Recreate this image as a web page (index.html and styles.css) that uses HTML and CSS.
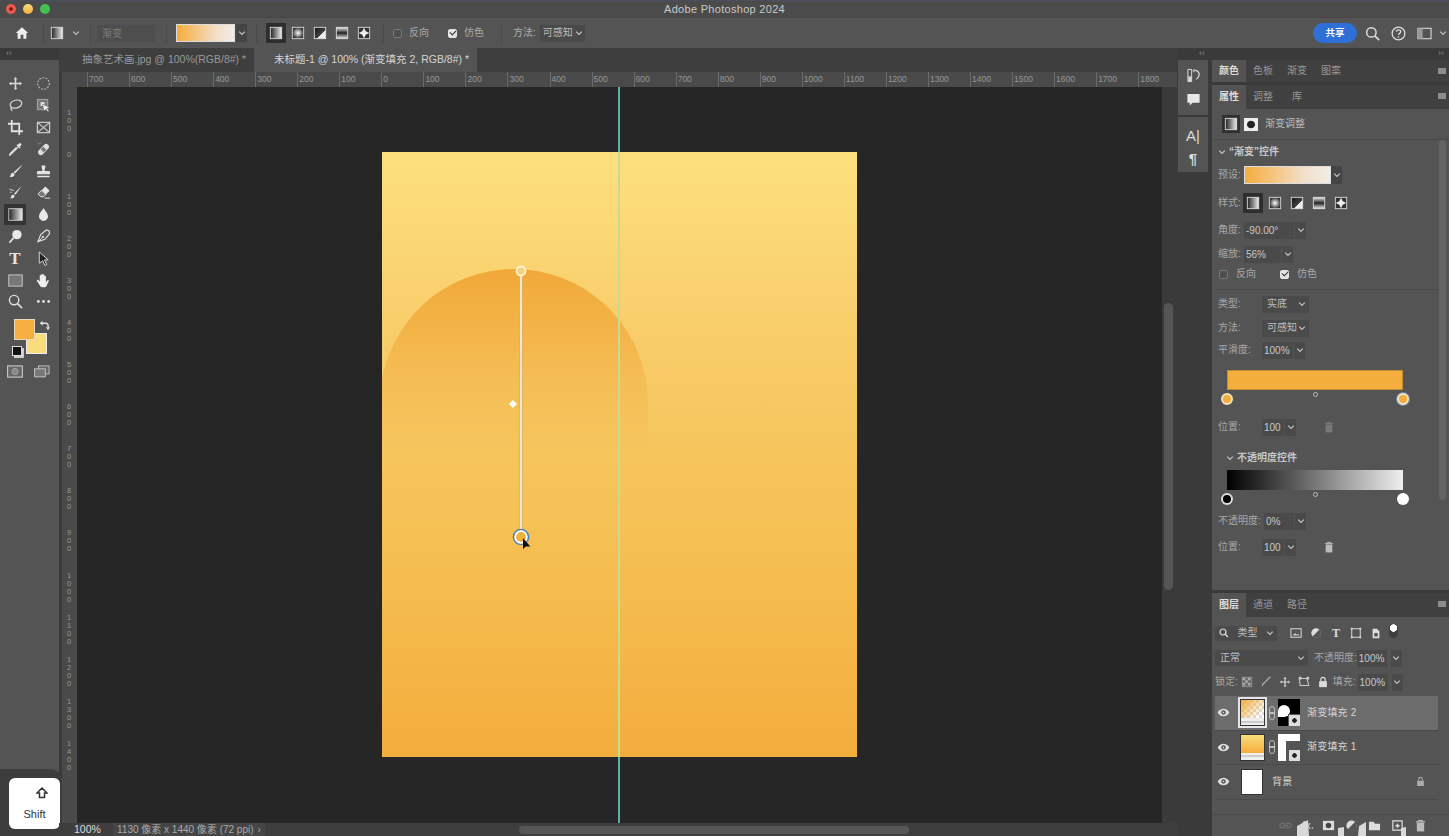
FILE: index.html
```html
<!DOCTYPE html>
<html lang="zh">
<head>
<meta charset="utf-8">
<title>Adobe Photoshop 2024</title>
<link rel="stylesheet" href="styles.css">
</head>
<body>
<svg class="sprite" aria-hidden="true">
  <defs>
    <linearGradient id="gtool" x1="0" x2="1" y1="0" y2="0"><stop offset="0" stop-color="#222"/><stop offset="1" stop-color="#eee"/></linearGradient>
    <radialGradient id="gradial"><stop offset="0" stop-color="#fff"/><stop offset="1" stop-color="#333"/></radialGradient>
    <linearGradient id="gangle" x1="0" x2="1" y1="0" y2="1"><stop offset="0" stop-color="#111"/><stop offset=".6" stop-color="#444"/><stop offset=".6" stop-color="#eee"/><stop offset="1" stop-color="#eee"/></linearGradient>
    <linearGradient id="gmirror" x1="0" x2="0" y1="0" y2="1"><stop offset="0" stop-color="#eee"/><stop offset=".5" stop-color="#222"/><stop offset="1" stop-color="#eee"/></linearGradient>
    <symbol id="i-chev" viewBox="0 0 8 8"><path d="M1.2 2.6 4 5.4l2.8-2.8" fill="none" stroke="#c4c4c4" stroke-width="1.2"/></symbol>
    <symbol id="s-linear" viewBox="0 0 16 16"><rect x="1.5" y="1.5" width="13" height="13" fill="url(#gtool)" stroke="#ddd"/></symbol>
    <symbol id="s-radial" viewBox="0 0 16 16"><rect x="1.5" y="1.5" width="13" height="13" fill="url(#gradial)" stroke="#ddd"/></symbol>
    <symbol id="s-angle" viewBox="0 0 16 16"><rect x="1.5" y="1.5" width="13" height="13" fill="url(#gangle)" stroke="#ddd"/></symbol>
    <symbol id="s-mirror" viewBox="0 0 16 16"><rect x="1.5" y="1.5" width="13" height="13" fill="url(#gmirror)" stroke="#ddd"/></symbol>
    <symbol id="s-diamond" viewBox="0 0 16 16"><rect x="1.5" y="1.5" width="13" height="13" fill="#333" stroke="#ddd"/><path d="M8 2 10 6 14 8 10 10 8 14 6 10 2 8 6 6Z" fill="#eee"/></symbol>
    <symbol id="t-move" viewBox="0 0 16 16"><path d="M8 1 10 3.5H8.8V7.2h3.7V6L15 8l-2.5 2V8.8H8.8v3.7H10L8 15l-2-2.5h1.2V8.8H3.5V10L1 8l2.5-2v1.2h3.7V3.5H6Z" fill="#d8d8d8"/></symbol>
    <symbol id="t-marquee" viewBox="0 0 16 16"><circle cx="8" cy="8" r="6.2" fill="none" stroke="#bbb" stroke-width="1.2" stroke-dasharray="2 1.4"/></symbol>
    <symbol id="t-lasso" viewBox="0 0 16 16"><ellipse cx="8.5" cy="6.5" rx="6.3" ry="4.2" fill="none" stroke="#d8d8d8" stroke-width="1.3" transform="rotate(-14 8.5 6.5)"/><path d="M4 10c-1.5 1-1 3 .8 3.4" fill="none" stroke="#d8d8d8" stroke-width="1.3"/></symbol>
    <symbol id="t-object" viewBox="0 0 16 16"><rect x="1.5" y="1.5" width="11" height="11" fill="#777" stroke="#aaa"/><path d="M5 4.5h4v4H5z" fill="#eee"/><path d="M7 6.5 15 10l-3 1 2 3-1.4 1-2-3-2.3 2Z" fill="#eee" stroke="#444" stroke-width=".5"/></symbol>
    <symbol id="t-crop" viewBox="0 0 16 16"><path d="M4 0v12h12M0 4h12v12" fill="none" stroke="#e0e0e0" stroke-width="1.9"/></symbol>
    <symbol id="t-frame" viewBox="0 0 16 16"><rect x="1.5" y="2.5" width="13" height="11" fill="none" stroke="#ccc" stroke-width="1.3"/><path d="M1.5 2.5l13 11M14.5 2.5l-13 11" stroke="#ccc" stroke-width="1.3"/></symbol>
    <symbol id="t-dropper" viewBox="0 0 16 16"><path d="M10.5 5.5 3 13l-1.5 1.5.9-2L9 6" fill="none" stroke="#ddd" stroke-width="1.6"/><path d="M9 3.5 12.5 7l1-1-1-1 1.4-1.4a1.4 1.4 0 0 0-2-2L10.5 3l-.6-.5Z" fill="#e4e4e4"/></symbol>
    <symbol id="t-heal" viewBox="0 0 16 16"><g transform="rotate(-45 8 8)"><rect x="1" y="5" width="14" height="6" rx="3" fill="#ddd"/><rect x="6" y="5.8" width="4" height="4.4" fill="#777"/></g><path d="M3 2.5a1 1 0 0 1 2-1" fill="none" stroke="#bbb" stroke-dasharray="1.5 1"/></symbol>
    <symbol id="t-brush" viewBox="0 0 16 16"><path d="M14.5 1.2 15 1.7 7.5 10.2 6 8.7Z" fill="#e4e4e4"/><path d="M5.5 9.2c-2 .2-2.5 1.5-2.8 3-.1.8-.6 1.2-1.4 1.6 2.8.6 5.5-.4 5.8-3Z" fill="#e4e4e4"/></symbol>
    <symbol id="t-stamp" viewBox="0 0 16 16"><path d="M6 1.5h4c.5 2.500-1.200 4-.8 6h4.300c.9 0 1.500.6 1.500 1.400V11H1V8.900c0-.8.6-1.400 1.500-1.400h4.300C7.200 5.500 5.500 4 6 1.500Z M1.500 12.500h13V14h-13Z" fill="#e4e4e4"/></symbol>
    <symbol id="t-mixer" viewBox="0 0 16 16"><path d="M14.500 1 6.500 9 8 10.500Z" fill="#e4e4e4"/><path d="M5.500 10c-1.800.4-2 1.600-2.300 2.700-.2.700-.6 1-1.200 1.300 2.500.6 5-.3 5-2.600Z" fill="#e4e4e4"/><path d="M1.500 4.500l5 1.500M2 7.500l2 .5" stroke="#aaa" stroke-width="1.400"/></symbol>
    <symbol id="t-eraser" viewBox="0 0 16 16"><path d="M10 1.500 14.500 6 8 12.500H5L2 9.500Z" fill="#e4e4e4"/><path d="M2 9.500 5 12.500H8L10.500 10 6 5.500Z" fill="#777" stroke="#e4e4e4"/><path d="M9 14h6" stroke="#ccc" stroke-width="1.200"/></symbol>
    <symbol id="t-gradient" viewBox="0 0 16 16"><rect x=".8" y="1.800" width="14.400" height="12.400" fill="url(#gtool)" stroke="#c8c8c8"/></symbol>
    <symbol id="t-drop" viewBox="0 0 16 16"><path d="M8 1c1.500 3 4.800 5.500 4.800 9a4.800 4.800 0 0 1-9.600 0C3.200 6.500 6.500 4 8 1Z" fill="#e8e8e8"/></symbol>
    <symbol id="t-dodge" viewBox="0 0 16 16"><circle cx="9.500" cy="6" r="5" fill="#e8e8e8"/><path d="M6 9.500 1.500 14.500" stroke="#e0e0e0" stroke-width="1.800"/></symbol>
    <symbol id="t-pen" viewBox="0 0 16 16"><path d="M14 2 11 1 5 6 2 13.500 9.500 11 14.500 5Z" fill="none" stroke="#ddd" stroke-width="1.300"/><path d="M2 14 7 9" stroke="#ddd"/><circle cx="7.500" cy="8.500" r="1.200" fill="#ddd"/></symbol>
    <symbol id="t-arrow" viewBox="0 0 16 16"><path d="M3.500 1 13 9.500H9l2.500 5-2 1-2.400-5L3.500 13Z" fill="#222" stroke="#ddd" stroke-width="1"/></symbol>
    <symbol id="t-rect" viewBox="0 0 16 16"><rect x=".8" y="2" width="14.400" height="12" fill="#777" stroke="#c8c8c8"/></symbol>
    <symbol id="t-hand" viewBox="0 0 16 16"><path d="M4 13 1 8.500c-.5-1 .8-1.800 1.500-1L4 9V3c0-1.200 1.600-1.200 1.600 0v4-5.200c0-1.200 1.700-1.200 1.700 0V7 2.300c0-1.200 1.700-1.200 1.700 0V7 3.700c0-1.200 1.600-1.200 1.600 0V10l1.400-2c.7-1 2-.2 1.500.8L11 14c-.4.800-1 1.200-2 1.200H6.500C5.400 15.200 4.600 14 4 13Z" fill="#eee"/></symbol>
    <symbol id="t-zoom" viewBox="0 0 16 16"><circle cx="6.500" cy="6.500" r="5" fill="none" stroke="#ddd" stroke-width="1.500"/><path d="M10 10l5 5" stroke="#ddd" stroke-width="1.800"/></symbol>
    <symbol id="t-dots" viewBox="0 0 16 16"><circle cx="2.500" cy="8" r="1.500" fill="#e4e4e4"/><circle cx="8" cy="8" r="1.500" fill="#e4e4e4"/><circle cx="13.500" cy="8" r="1.500" fill="#e4e4e4"/></symbol>
    <symbol id="t-mask" viewBox="0 0 18 14"><rect x=".7" y=".7" width="16.600" height="12.600" fill="#666" stroke="#ccc" stroke-width="1.200"/><circle cx="9" cy="7" r="3.500" fill="#888" stroke="#aaa"/></symbol>
    <symbol id="t-screen" viewBox="0 0 18 14"><rect x="5" y=".7" width="12" height="9" fill="#666" stroke="#ccc"/><rect x=".7" y="4" width="12" height="9" fill="#777" stroke="#ccc"/></symbol>
    <symbol id="i-eye" viewBox="0 0 14 10"><path d="M.5 5C2 2 4.500 .8 7 .8S12 2 13.500 5C12 8 9.500 9.200 7 9.200S2 8 .5 5Z" fill="#ddd"/><circle cx="7" cy="5" r="2.400" fill="#444"/><circle cx="7" cy="5" r="1" fill="#ddd"/></symbol>
    <symbol id="i-trash" viewBox="0 0 12 14"><path d="M1 3h10M4 3V1.500h4V3" fill="none" stroke="currentColor" stroke-width="1.200"/><path d="M2 4h8v9.500H2Z" fill="currentColor"/></symbol>
    <symbol id="i-lock" viewBox="0 0 12 14"><path d="M3.500 6V4a2.500 2.500 0 0 1 5 0v2" fill="none" stroke="currentColor" stroke-width="1.400"/><rect x="1.500" y="6" width="9" height="7" fill="currentColor"/></symbol>
  </defs>
</svg>

<header class="titlebar">
  <div class="lights"><span class="light red"></span><span class="light yellow"></span><span class="light green"></span></div>
  <div class="apptitle">Adobe Photoshop 2024</div>
</header>

<div class="optionsbar">
  <svg class="home" viewBox="0 0 16 16"><path d="M8 1.500 15 8h-2v6.500H9.600V10H6.400v4.500H3V8H1Z" fill="#eee"/></svg>
  <span class="sep home-sep"></span>
  <svg class="ico14"><use href="#s-linear"/></svg>
  <svg class="chev opt-chev"><use href="#i-chev"/></svg>
  <span class="sep tool-sep"></span>
  <div class="preset-input">渐变</div>
  <span class="sep"></span>
  <div class="swatch-wrap"><div class="gradient-swatch"></div><div class="chev-box"><svg class="chev"><use href="#i-chev"/></svg></div></div>
  <span class="sep"></span>
  <div class="styles">
    <span class="style-btn active"><svg class="ico14"><use href="#s-linear"/></svg></span>
    <span class="style-btn"><svg class="ico14"><use href="#s-radial"/></svg></span>
    <span class="style-btn"><svg class="ico14"><use href="#s-angle"/></svg></span>
    <span class="style-btn"><svg class="ico14"><use href="#s-mirror"/></svg></span>
    <span class="style-btn"><svg class="ico14"><use href="#s-diamond"/></svg></span>
  </div>
  <span class="sep"></span>
  <label class="check opt-check"><span class="box"></span>反向</label>
  <label class="check opt-check"><span class="box on"></span>仿色</label>
  <span class="sep"></span>
  <span class="opt-label">方法:</span>
  <div class="select opt-select"><span>可感知</span><svg class="chev"><use href="#i-chev"/></svg></div>
  <div class="spacer"></div>
  <button class="share">共享</button>
  <svg class="opt-ic" viewBox="0 0 16 16"><circle cx="6.800" cy="6.800" r="5" fill="none" stroke="#ddd" stroke-width="1.600"/><path d="M10.500 10.500 15 15" stroke="#ddd" stroke-width="1.800"/></svg>
  <svg class="opt-ic" viewBox="0 0 16 16"><circle cx="8" cy="8" r="6.800" fill="none" stroke="#ddd" stroke-width="1.400"/><path d="M5.800 6.200C5.900 3.400 10.300 3.500 10.300 6c0 1.700-2.300 1.700-2.300 3.700" fill="none" stroke="#ddd" stroke-width="1.400"/><circle cx="8" cy="11.700" r=".9" fill="#ddd"/></svg>
  <svg class="opt-ic" viewBox="0 0 16 16"><rect x="1" y="2.500" width="14" height="11" fill="none" stroke="#ccc" stroke-width="1.300"/><rect x="1" y="2.500" width="5" height="11" fill="#999"/></svg>
  <svg class="chev opt-end"><use href="#i-chev"/></svg>
</div>

<div class="workspace">
  <aside class="toolcol">
    <div class="collapse">‹‹</div>
    <div class="tools">
      <svg class="tool"><use href="#t-move"/></svg><svg class="tool"><use href="#t-marquee"/></svg>
      <svg class="tool"><use href="#t-lasso"/></svg><svg class="tool"><use href="#t-object"/></svg>
      <svg class="tool"><use href="#t-crop"/></svg><svg class="tool"><use href="#t-frame"/></svg>
      <svg class="tool"><use href="#t-dropper"/></svg><svg class="tool"><use href="#t-heal"/></svg>
      <svg class="tool"><use href="#t-brush"/></svg><svg class="tool"><use href="#t-stamp"/></svg>
      <svg class="tool"><use href="#t-mixer"/></svg><svg class="tool"><use href="#t-eraser"/></svg>
      <span class="tool-active"><svg class="tool"><use href="#t-gradient"/></svg></span><svg class="tool"><use href="#t-drop"/></svg>
      <svg class="tool"><use href="#t-dodge"/></svg><svg class="tool"><use href="#t-pen"/></svg>
      <span class="tool-t">T</span><svg class="tool"><use href="#t-arrow"/></svg>
      <svg class="tool"><use href="#t-rect"/></svg><svg class="tool"><use href="#t-hand"/></svg>
      <svg class="tool"><use href="#t-zoom"/></svg><svg class="tool"><use href="#t-dots"/></svg>
    </div>
    <div class="colors">
      <span class="bgcolor"></span><span class="fgcolor"></span>
      <svg class="swap" viewBox="0 0 12 12"><path d="M1.500 3.500h6c1.800 0 2.500 1 2.500 3v2" fill="none" stroke="#ddd" stroke-width="1.500"/><path d="M4 .8v5.400L1 3.500ZM7.500 8H12l-2.200 3.200Z" fill="#ddd"/></svg>
      <span class="defcolor"></span>
    </div>
    <div class="modes">
      <svg class="mode"><use href="#t-mask"/></svg>
      <svg class="mode"><use href="#t-screen"/></svg>
    </div>
    <div class="shift-key">
      <div class="shift-cap">
        <svg class="shift-ic" viewBox="0 0 12 12"><path d="M6 1 11 6H8.500v4.500h-5V6H1Z" fill="none" stroke="#333" stroke-width="1.500"/></svg>
        <span class="shift-label">Shift</span>
      </div>
    </div>
  </aside>

  <main class="docarea">
    <div class="tabs">
      <div class="tab">抽象艺术画.jpg @ 100%(RGB/8#) *</div>
      <div class="tab current">未标题-1 @ 100% (渐变填充 2, RGB/8#) *</div>
    </div>
    <div class="hruler">
      <span class="corner"></span>
      <div class="hticks">
        <span>700</span><span>600</span><span>500</span><span>400</span><span>300</span><span>200</span><span>100</span><span>0</span><span>100</span><span>200</span><span>300</span><span>400</span><span>500</span><span>600</span><span>700</span><span>800</span><span>900</span><span>1000</span><span>1100</span><span>1200</span><span>1300</span><span>1400</span><span>1500</span><span>1600</span><span>1700</span><span>1800</span>
      </div>
    </div>
    <div class="midrow">
      <div class="vruler">
        <span>100</span><span>0</span><span>100</span><span>200</span><span>300</span><span>400</span><span>500</span><span>600</span><span>700</span><span>800</span><span>900</span><span>1000</span><span>1100</span><span>1200</span><span>1300</span><span>1400</span>
      </div>
      <div class="canvas">
        <span class="guide"></span>
        <div class="doc">
          <svg class="doc-art" viewBox="0 0 475 605">
            <defs><linearGradient id="arch" gradientUnits="userSpaceOnUse" x1="0" x2="0" y1="117" y2="305"><stop offset="0" stop-color="#f0a838"/><stop offset=".3" stop-color="#f2ae40" stop-opacity=".85"/><stop offset="1" stop-color="#f3b24a" stop-opacity="0"/></linearGradient></defs>
            <path d="M0 228A134 134 0 0 1 266 251V305H0Z" fill="url(#arch)"/>
            <rect class="guide-light" x="236" y="0" width="2" height="605"/>
            <line x1="139" y1="124" x2="139" y2="378" stroke="#d9b06a" stroke-width="3.500"/>
            <line x1="139" y1="124" x2="139" y2="378" stroke="#fff6df" stroke-width="1.600"/>
            <circle cx="139" cy="119" r="4.500" fill="#f8d27a" stroke="#fff3d8" stroke-width="1.800"/>
            <path d="M131 248l4 4-4 4-4-4Z" fill="#fff"/>
            <circle cx="139" cy="385" r="7.500" fill="#f2b040" stroke="#4a82b8" stroke-width="1.600"/>
            <circle cx="139" cy="385" r="5.800" fill="none" stroke="#fff" stroke-width="1.800"/>
            <path d="M141 386v11l2.800-2.600 4.500.2Z" fill="#111"/>
          </svg>
        </div>
      </div>
      <div class="vscroll"><span class="vthumb"></span></div>
    </div>
    <div class="status">
      <span class="zoomval">100%</span>
      <span class="docinfo">1130 像素 x 1440 像素 (72 ppi)<i class="more">›</i></span>
      <span class="hthumb"></span>
    </div>
  </main>

  <aside class="dockcol">
    <div class="collapse right">‹‹</div>
    <div class="dockgroup">
      <svg class="dockic" viewBox="0 0 16 16"><path d="M2 1.500h4v13H2Z" fill="none" stroke="#ddd"/><path d="M2.500 9h3v5h-3Z" fill="#ddd"/><path d="M9.500 2.500c3 0 4.500 2 4.500 4.500s-1.500 4-3 5" fill="none" stroke="#ddd" stroke-width="1.400"/><path d="M9 .8v4l-2-2Z" fill="#ddd"/></svg>
      <svg class="dockic" viewBox="0 0 16 16"><path d="M1.500 2h13v9.500H7L4 14.500v-3H1.500Z" fill="#e8e8e8"/></svg>
    </div>
    <div class="dockgroup second">
      <span class="dock-a">A|</span>
      <span class="dock-p">¶</span>
    </div>
  </aside>

  <aside class="panels">
    <div class="collapse right-end">››</div>
    <div class="ptabs">
      <span class="ptab on">颜色</span><span class="ptab">色板</span><span class="ptab">渐变</span><span class="ptab">图案</span><i class="pmenu"></i>
    </div>
    <div class="ptabs second">
      <span class="ptab on">属性</span><span class="ptab">调整</span><span class="ptab">库</span><i class="pmenu"></i>
    </div>
    <section class="props">
      <div class="prop-head">
        <span class="head-btn"><svg class="ico14"><use href="#s-linear"/></svg></span>
        <span class="mask-ic"></span>
        <span class="head-text">渐变调整</span>
      </div>
      <div class="prop-body">
        <div class="row sec-row"><svg class="chev"><use href="#i-chev"/></svg><b>“渐变”控件</b></div>
        <div class="row"><span class="lbl">预设:</span><div class="swatch-wrap mini"><div class="gradient-swatch"></div><div class="chev-box"><svg class="chev"><use href="#i-chev"/></svg></div></div></div>
        <div class="row style-row">
          <span class="lbl">样式:</span>
          <div class="styles small">
            <span class="style-btn active"><svg class="ico14"><use href="#s-linear"/></svg></span>
            <span class="style-btn"><svg class="ico14"><use href="#s-radial"/></svg></span>
            <span class="style-btn"><svg class="ico14"><use href="#s-angle"/></svg></span>
            <span class="style-btn"><svg class="ico14"><use href="#s-mirror"/></svg></span>
            <span class="style-btn"><svg class="ico14"><use href="#s-diamond"/></svg></span>
          </div>
        </div>
        <div class="row gap2"><span class="lbl">角度:</span><span class="field w50">-90.00°</span><span class="fchev"><svg class="chev"><use href="#i-chev"/></svg></span></div>
        <div class="row gap2"><span class="lbl">缩放:</span><span class="field w38">56%</span><span class="fchev"><svg class="chev"><use href="#i-chev"/></svg></span></div>
        <div class="row check-row"><label class="check"><span class="box"></span>反向</label><label class="check second-check"><span class="box on"></span>仿色</label></div>
        <div class="divider"></div>
        <div class="row wide"><span class="lbl">类型:</span><div class="select"><span>实底</span><svg class="chev"><use href="#i-chev"/></svg></div></div>
        <div class="row wide gap2"><span class="lbl">方法:</span><div class="select"><span>可感知</span><svg class="chev"><use href="#i-chev"/></svg></div></div>
        <div class="row wide"><span class="lbl">平滑度:</span><span class="field w32">100%</span><span class="fchev"><svg class="chev"><use href="#i-chev"/></svg></span></div>
        <div class="gbar orange"></div>
        <div class="stops">
          <span class="stop orange-stop"></span><span class="mid"></span><span class="stop orange-stop sel"></span>
        </div>
        <div class="row wide pos-row"><span class="lbl">位置:</span><span class="field w24">100</span><span class="fchev"><svg class="chev"><use href="#i-chev"/></svg></span><svg class="trash dim"><use href="#i-trash"/></svg></div>
        <div class="row sec-row sec2"><svg class="chev"><use href="#i-chev"/></svg><b>不透明度控件</b></div>
        <div class="gbar opacity"></div>
        <div class="stops">
          <span class="stop black-stop"></span><span class="mid"></span><span class="stop white-stop"></span>
        </div>
        <div class="row op-row"><span class="lbl">不透明度:</span><span class="field w30">0%</span><span class="fchev"><svg class="chev"><use href="#i-chev"/></svg></span></div>
        <div class="row wide pos2-row"><span class="lbl">位置:</span><span class="field w24">100</span><span class="fchev"><svg class="chev"><use href="#i-chev"/></svg></span><svg class="trash"><use href="#i-trash"/></svg></div>
      </div>
      <div class="pscroll"><span class="pthumb"></span></div>
    </section>
    <div class="ptabs third">
      <span class="ptab on">图层</span><span class="ptab">通道</span><span class="ptab">路径</span><i class="pmenu"></i>
    </div>
    <section class="layers">
      <div class="lrow filter-row">
        <div class="select filter"><svg class="search-mini" viewBox="0 0 10 10"><circle cx="4" cy="4" r="3" fill="none" stroke="#ddd" stroke-width="1.200"/><path d="M6.200 6.200 9 9" stroke="#ddd" stroke-width="1.300"/></svg><span>类型</span><svg class="chev"><use href="#i-chev"/></svg></div>
        <div class="filter-icons">
          <svg class="fic" viewBox="0 0 14 14"><rect x="1" y="2" width="12" height="10" fill="none" stroke="#ccc" stroke-width="1.300"/><path d="M3 10l3-3 2 2 1.500-1L11 10Z" fill="#ccc"/></svg>
          <svg class="fic" viewBox="0 0 14 14"><circle cx="7" cy="7" r="5.500" fill="#ddd"/><path d="M7 7 11 3a5.500 5.500 0 0 1-8 8Z" fill="#555"/></svg>
          <span class="fic-t">T</span>
          <svg class="fic" viewBox="0 0 14 14"><rect x="2" y="2" width="10" height="10" fill="none" stroke="#ccc" stroke-width="1.300"/><path d="M1 1h2v2H1ZM11 1h2v2h-2ZM1 11h2v2H1ZM11 11h2v2h-2Z" fill="#ddd"/></svg>
          <svg class="fic" viewBox="0 0 14 14"><path d="M3 7V2h5l3 3v8H3Z" fill="#ddd"/><rect x="5" y="7" width="4" height="4" fill="#555"/></svg>
          <span class="toggle"></span>
        </div>
      </div>
      <div class="lrow blend-row">
        <div class="select blend"><span>正常</span><svg class="chev"><use href="#i-chev"/></svg></div>
        <span class="lbl tight">不透明度:</span><span class="field w30">100%</span><span class="fchev"><svg class="chev"><use href="#i-chev"/></svg></span>
      </div>
      <div class="lrow lock-row">
        <span class="lbl tight">锁定:</span>
        <svg class="lic first" viewBox="0 0 14 14"><rect x="1.500" y="1.500" width="11" height="11" fill="#666" stroke="#999"/><path d="M2 2h3v3H2ZM8 2h3v3H8ZM5 5h3v3H5ZM2 8h3v3H2ZM8 8h3v3H8Z" fill="#aaa"/></svg>
        <svg class="lic" viewBox="0 0 14 14"><path d="M13 1 4 10 2 13l.5-3.500L11 1Z" fill="#bbb"/></svg>
        <svg class="lic" viewBox="0 0 16 16"><use href="#t-move"/></svg>
        <svg class="lic" viewBox="0 0 14 14"><path d="M1.500 3h9l2 8h-10Z" fill="none" stroke="#ccc" stroke-width="1.200"/><path d="M1 1h3v3H1ZM10 1h3v3h-3Z" fill="#ccc"/></svg>
        <svg class="lic lock-w"><use href="#i-lock"/></svg>
        <span class="lbl tight fill-lbl">填充:</span><span class="field w30">100%</span><span class="fchev"><svg class="chev"><use href="#i-chev"/></svg></span>
      </div>
      <div class="layerlist">
        <div class="layer selected">
          <svg class="eye"><use href="#i-eye"/></svg>
          <div class="thumb sel-thumb"><span class="th-grad checker"></span><span class="th-strip"></span></div>
          <span class="chain"></span>
          <div class="mask black"><span class="mask-shape"></span><span class="mask-badge"></span></div>
          <span class="lname">渐变填充 2</span>
        </div>
        <div class="layer">
          <svg class="eye"><use href="#i-eye"/></svg>
          <div class="thumb"><span class="th-grad yellow"></span><span class="th-strip"></span></div>
          <span class="chain"></span>
          <div class="mask white"><span class="mask-cut"></span><span class="mask-badge"></span></div>
          <span class="lname">渐变填充 1</span>
        </div>
        <div class="layer">
          <svg class="eye"><use href="#i-eye"/></svg>
          <div class="thumb plain"></div>
          <span class="lname bgname">背景</span>
          <svg class="lock-r"><use href="#i-lock"/></svg>
        </div>
      </div>
      <div class="lfooter">
        <svg class="foot-ic" viewBox="0 0 14 14"><path d="M1 7a2.500 2.500 0 0 1 2.500-2.500h2v5h-2A2.500 2.500 0 0 1 1 7ZM13 7a2.500 2.500 0 0 0-2.500-2.500h-2v5h2A2.500 2.500 0 0 0 13 7ZM5 7h4" fill="none" stroke="#777" stroke-width="1.100"/></svg>
        <span class="foot-fx">fx.</span>
        <svg class="foot-ic" viewBox="0 0 14 14"><rect x="1" y="2" width="12" height="10" fill="#ddd"/><circle cx="7" cy="7" r="3" fill="#444"/></svg>
        <svg class="foot-ic" viewBox="0 0 14 14"><circle cx="7" cy="7" r="5.500" fill="#ddd"/><path d="M7 7 11 3a5.500 5.500 0 0 1-8 8Z" fill="#555"/></svg>
        <svg class="foot-ic" viewBox="0 0 14 14"><path d="M1 3h5l1.500 2H13v7H1Z" fill="#ddd"/></svg>
        <svg class="foot-ic" viewBox="0 0 14 14"><path d="M2 2h10v10H2Z" fill="none" stroke="#ddd" stroke-width="1.300"/><path d="M6.200 5h1.600v1.500h1.500V8H7.800v1.500H6.200V8H4.700V6.500h1.500Z" fill="#ddd"/></svg>
        <svg class="foot-ic trash-f"><use href="#i-trash"/></svg>
        <svg class="smears" viewBox="0 0 110 16">
          <path d="M0 6 11 0 12 16H0ZM41 8 47 7 47 16H41ZM62 6 69 2 69 16H61ZM104 8 109 7 109 16H104Z" fill="#d9d9d9"/>
        </svg>
      </div>
    </section>
  </aside>
</div>
</body>
</html>
```

FILE: styles.css
```css
* { box-sizing: border-box; }
html, body { margin: 0; height: 836px; overflow: hidden; }
body {
  background: #3a3a3a;
  color: #c0c0c0;
  font: 10px/1 "Liberation Sans", "Noto Sans CJK SC", sans-serif;
  display: flex;
  flex-direction: column;
  width: 1449px;
}
svg { display: block; flex: none; }
.sprite { width: 0; height: 0; position: absolute; }
button { font: inherit; border: 0; }
.chev { width: 8px; height: 8px; }

/* Title */
.titlebar {
  height: 17px;
  background: #4b4b4b;
  border-top: 1px solid #4b4e60;
  display: grid;
  grid-template-columns: 1fr;
  align-items: center;
  flex: none;
  position: relative;
}
.lights { display: flex; gap: 7px; padding-left: 6px; grid-area: 1 / 1; }
.light { width: 10px; height: 10px; border-radius: 50%; }
.red { background: radial-gradient(circle, #7c1d1d 0 1.5px, #ee5a50 2.200px); }
.yellow { background: #f5bd3b; }
.green { background: #3fc24f; }
.apptitle { grid-area: 1 / 1; text-align: center; font-size: 11px; color: #c9c9c9; letter-spacing: .3px; }

/* Options */
.optionsbar {
  height: 31px;
  flex: none;
  background: #545454;
  border-top: 1px solid #474747;
  display: flex;
  align-items: center;
  padding-left: 15px;
}
.home { width: 14px; height: 14px; margin-right: 10px; }
.sep { width: 1px; height: 22px; background: #4a4a4a; flex: none; margin: 0 9px; }
.home-sep { margin: 0 6px 0 4px; }
.tool-sep { margin: 0 5px 0 9px; }
.ico14 { width: 14px; height: 14px; }
.opt-chev { margin-left: 8px; margin-right: 1px; }
.preset-input {
  width: 58px; height: 17px; line-height: 17px; padding-left: 5px;
  background: #4e4e4e; color: #7c7c7c; margin: 0 2px 0 1px;
}
.swatch-wrap { display: flex; align-items: stretch; height: 18px; }
.gradient-swatch {
  width: 59px;
  background: linear-gradient(90deg, #f5ad3c 0%, #f6c583 35%, #f3dfca 70%, #f1ece6 100%);
  border: 1px solid #ddd;
}
.chev-box { width: 11px; background: #444; display: flex; align-items: center; justify-content: center; margin-left: 1px; }
.styles { display: flex; align-items: center; gap: 2px; }
.style-btn { width: 20px; height: 20px; display: flex; align-items: center; justify-content: center; }
.style-btn.active { background: #2e2e2e; }
.check { display: flex; align-items: center; gap: 7px; color: #aaa; }
.box { width: 9px; height: 9px; border: 1px solid #777; border-radius: 2px; background: #4e4e4e; position: relative; flex: none; }
.box.on { background: #e4e4e4; border-color: #e4e4e4; }
.box.on::after { content: ""; position: absolute; left: 1px; top: 0; width: 5px; height: 3px; border-left: 1.500px solid #333; border-bottom: 1.500px solid #333; transform: rotate(-45deg); }
.opt-check { margin-right: 8px; }
.opt-check + .opt-check { margin-left: 11px; }
.opt-label { color: #b0b0b0; margin: 0 4px 0 2px; white-space: nowrap; }
.select {
  height: 17px; background: #4a4a4a; color: #bdbdbd;
  display: flex; align-items: center; justify-content: space-between;
  padding: 0 3px 0 5px; width: 47px; white-space: nowrap; flex: none;
}
.select span { flex: none; }
.opt-select { width: 45px; padding: 0 2px 0 3px; }
.spacer { flex: 1; }
.share { width: 44px; height: 20px; border-radius: 10px; background: #2e6fd8; color: #fff; font-size: 9.500px; font-weight: bold; margin-right: 8px; }
.opt-ic { width: 15px; height: 15px; margin-right: 11px; }
.opt-end { margin-left: -4px; margin-right: 2px; }

/* Workspace */
.workspace { flex: 1; display: grid; grid-template-columns: 59px 1118px 33px 1fr; grid-template-rows: 788px; column-gap: 0; }
.collapse { height: 12px; font-size: 9px; line-height: 11px; padding-left: 6px; color: #8a8a8a; background: #3a3a3a; }

.toolcol { position: relative; background: #545454; display: flex; flex-direction: column; }
.tools { display: grid; grid-template-columns: 28px 28px; grid-auto-rows: 21.800px; padding: 13px 0 0 1px; justify-items: center; align-items: center; }
.tool { width: 15px; height: 15px; }
.tool-active { width: 22px; height: 21px; background: #343434; display: flex; align-items: center; justify-content: center; }
.tool-t { font: bold 17px/1 "Liberation Serif", serif; color: #e4e4e4; }
.colors { position: relative; height: 40px; margin-top: 6px; }
.bgcolor { position: absolute; left: 26px; top: 14px; width: 21px; height: 21px; background: #fbdc7d; border: 1px solid #eee; }
.fgcolor { position: absolute; left: 14px; top: 0; width: 21px; height: 21px; background: #f6ae3f; border: 1px solid #e8d8b8; }
.swap { position: absolute; left: 39px; top: 1px; width: 11px; height: 11px; }
.defcolor { position: absolute; left: 12px; top: 27px; width: 10px; height: 10px; background: #111; border: 1px solid #ddd; box-shadow: 2px 2px 0 #ccc; }
.modes { display: flex; gap: 11px; padding-left: 7px; margin-top: 6px; }
.mode { width: 16px; height: 13px; }
.shift-key { position: absolute; left: 0; bottom: 0; width: 62px; height: 67px; background: #3d3d3d; border-radius: 0 12px 0 0; padding: 9px 0 0 9px; }
.shift-cap { width: 51px; height: 51px; background: #fff; border-radius: 6px; position: relative; display: flex; flex-direction: column; align-items: center; }
.shift-ic { width: 12px; height: 12px; margin: 9px 0 0 15px; }
.shift-label { color: #333; font-size: 11px; margin-top: 10px; }

/* Doc area */
.docarea { display: flex; flex-direction: column; background: #3a3a3a; min-width: 0; }
.tabs { height: 24px; flex: none; display: flex; align-items: stretch; background: #3e3e3e; }
.tab { padding: 6px 10px 0 23px; width: 195px; color: #9a9a9a; font-size: 10.500px; white-space: nowrap; }
.tab.current { background: #545454; color: #d4d4d4; width: 223px; padding-left: 20px; }
.hruler { height: 15px; flex: none; display: flex; background: #3a3a3a; }
.corner { width: 18px; flex: none; background: #4a4a4a; margin-left: 3px; }
.hticks { flex: 1; background: #4a4a4a; display: flex; padding-left: 7px; overflow: hidden; }
.hticks span { width: 42.050px; flex: none; border-left: 1px solid #6a6a6a; padding: 3px 0 0 1px; color: #979797; font-size: 8.500px; height: 15px; }
.midrow { flex: 1; display: flex; min-height: 0; }
.vruler { width: 15px; margin-left: 3px; flex: none; background: #4a4a4a; display: flex; flex-direction: column; padding-top: 22px; overflow: hidden; }
.vruler span { height: 42.050px; flex: none; width: 6px; margin-left: 5px; word-break: break-all; font-size: 7.500px; line-height: 8px; color: #979797; }
.canvas { width: 1085px; flex: none; background: #262626; display: flex; align-items: center; justify-content: center; position: relative; }
.guide { position: absolute; left: 541px; top: 0; bottom: 0; width: 2px; background: #57b3a2; }
.doc {
  width: 475px; height: 605px; position: relative; margin-bottom: 1px;
  background: linear-gradient(180deg, #fde07e 0%, #f8cd6a 30%, #f6c55c 50%, #f5bd50 70%, #f3ad3c 100%);
}
.doc-art { width: 475px; height: 605px; }
.guide-light { fill: #c6dc92; }
.vscroll { flex: 1; background: #3a3a3a; padding: 216px 4px 0 2px; }
.vthumb { display: block; height: 287px; background: #555; border-radius: 5px; }
.status { height: 13px; flex: none; background: #3e3e3e; display: flex; align-items: center; position: relative; padding-left: 15px; }
.zoomval { color: #dcdcdc; font-size: 10.500px; width: 39px; }
.docinfo { background: #454545; height: 13px; line-height: 13px; width: 152px; padding-left: 4px; color: #a8a8a8; white-space: nowrap; font-size: 10px; }
.more { font-style: normal; margin-left: 4px; }
.hthumb { width: 390px; height: 8px; background: #565656; border-radius: 4px; margin-left: 254px; }

/* Dock */
.dockcol { background: #3a3a3a; }
.dockcol .collapse.right { text-align: right; padding-right: 5px; }
.dockgroup { background: #545454; width: 30px; margin-left: 1px; padding: 8px 0 8px; display: flex; flex-direction: column; align-items: center; gap: 9px; height: 55px; margin-top: 0; }
.dockgroup.second { margin-top: 2px; height: 55px; gap: 8px; padding-top: 11px; }
.dockic { width: 15px; height: 15px; }
.dock-a { color: #ddd; font-size: 15px; }
.dock-p { color: #ddd; font-size: 15px; font-weight: bold; }

/* Panels */
.panels { background: #3a3a3a; padding-left: 2px; display: flex; flex-direction: column; min-width: 0; }
.collapse.right-end { text-align: right; padding-right: 5px; }
.ptabs { height: 22px; flex: none; display: flex; background: #404040; position: relative; align-items: stretch; }
.ptabs.second { height: 24px; margin-top: 3px; }
.ptabs.third { height: 24px; margin-top: 3px; }
.ptab { width: 34px; text-align: center; color: #969696; line-height: 22px; font-size: 10px; }
.ptabs.second .ptab, .ptabs.third .ptab { line-height: 24px; }
.ptab.on { background: #545454; color: #dcdcdc; font-weight: bold; }
.pmenu { position: absolute; right: 3px; top: 8px; width: 8px; height: 6px; background: #8c8c8c; }

.props { height: 481px; flex: none; background: #545454; position: relative; display: flex; flex-direction: column; }
.prop-head { height: 31px; flex: none; border-bottom: 1px solid #4a4a4a; display: flex; align-items: center; padding-left: 10px; }
.head-btn { width: 18px; height: 18px; background: #2f2f2f; display: flex; align-items: center; justify-content: center; }
.mask-ic { width: 14px; height: 13px; background: radial-gradient(ellipse, #222 0 3.500px, #eee 4.500px); margin-left: 4px; }
.head-text { margin-left: 7px; color: #bbb; }
.prop-body { padding-left: 6px; display: flex; flex-direction: column; flex: 1; }
.row { height: 22px; display: flex; align-items: center; flex: none; }
.sec-row { height: 24px; gap: 3px; }
.sec-row b { color: #c8c8c8; font-size: 10px; }
.sec2 { padding-left: 8px; height: 22px; margin-top: 9px; }
.lbl { color: #a8a8a8; width: 26px; flex: none; white-space: nowrap; }
.lbl.tight { width: auto; }
.wide .lbl { width: 44px; }
.mini .gradient-swatch { width: 87px; }
.mini { height: 18px; }
.mini .chev-box { margin-left: 0; }
.style-row { height: 28px; margin-top: 3px; }
.styles.small { margin: 0 0 0 -1px; }
.gap2 { margin-top: 2px; }
.field { height: 17px; line-height: 17px; background: #4a4a4a; color: #c8c8c8; padding-left: 2px; flex: none; white-space: nowrap; }
.fchev { width: 11px; height: 17px; background: #4a4a4a; margin-left: 1px; display: flex; align-items: center; justify-content: center; flex: none; }
.w50 { width: 50px; } .w38 { width: 37px; } .w32 { width: 31px; } .w24 { width: 22px; } .w30 { width: 30px; }
.check-row { height: 18px; padding-left: 1px; }
.second-check { margin-left: 24px; }
.check-row .check { gap: 8px; }
.divider { height: 1px; background: #4b4b4b; margin: 6px 10px 3px 0; flex: none; }
.gbar { width: 176px; height: 20px; margin: 9px 0 0 9px; flex: none; }
.gbar.orange { background: #f3ae3c; border: 1px solid #c58a2c; }
.gbar.opacity { margin-top: 1px; background: linear-gradient(90deg, #000, #eee); }
.stops { width: 188px; margin-left: 3px; height: 18px; display: flex; justify-content: space-between; align-items: flex-start; flex: none; padding-top: 3px; }
.stop { width: 12px; height: 12px; border-radius: 50%; flex: none; margin-top: 0; }
.orange-stop { background: #f3ae3c; border: 2px solid #f4e3bd; }
.orange-stop.sel { box-shadow: 0 0 0 1px #6f89b0; }
.black-stop { background: #000; border: 2px solid #ddd; }
.white-stop { background: #fff; }
.mid { width: 5px; height: 5px; border: 1px solid #bbb; border-radius: 50%; margin-top: -1px; }
.pos-row { margin-top: 8px; }
.trash { width: 10px; height: 12px; margin-left: 28px; color: #bbb; }
.trash.dim { color: #777; }
.op-row { margin-top: 2px; }
.op-row .lbl { width: 46px; }
.pos2-row { margin-top: 4px; }
.pscroll { position: absolute; right: 1px; top: 0; bottom: 0; width: 9px; padding-top: 31px; }
.pthumb { display: block; width: 7px; height: 360px; border-radius: 4px; background: #646464; }

/* Layers */
.layers { flex: 1; background: #545454; display: flex; flex-direction: column; min-height: 0; }
.lrow { flex: none; display: flex; align-items: center; padding-left: 3px; }
.filter-row { height: 26px; margin-top: 3px; }
.select.filter { width: 62px; height: 15px; padding-left: 4px; }
.search-mini { width: 10px; height: 10px; }
.filter-icons { display: flex; align-items: center; gap: 8px; margin-left: 13px; }
.fic { width: 12px; height: 12px; }
.fic-t { width: 12px; font: bold 12px/1 "Liberation Serif", serif; color: #ddd; text-align: center; }
.toggle { width: 9px; height: 14px; border-radius: 5px; background: radial-gradient(circle at 50% 4px, #fff 0 3.500px, #3e3e3e 4px); margin-top: -5px; margin-left: -1px; }
.blend-row { height: 22px; margin-top: 1px; }
.select.blend { width: 93px; height: 16px; margin-right: 6px; }
.blend-row .fchev, .lock-row .fchev { margin-left: 4px; }
.lock-row { height: 24px; margin-top: 1px; padding-left: 3px; }
.lic { width: 12px; height: 12px; margin-left: 7px; }
.lic.first { margin-left: 3px; }
.lock-w { color: #ddd; }
.fill-lbl { margin-left: 4px; margin-right: 2px; }
.layerlist { margin: 2px 0 0 3px; width: 223px; flex: none; }
.layer { height: 34.500px; display: flex; align-items: center; border-bottom: 1px solid #4a4a4a; padding-left: 2px; }
.layer.selected { background: #6c6c6c; }
.eye { width: 13px; height: 9px; margin-right: 10px; }
.thumb { width: 25px; height: 27px; display: flex; flex-direction: column; background: #ddd; border: 1px solid #333; flex: none; }
.sel-thumb { outline: 2px solid #e6e6e6; outline-offset: 0; }
.th-grad { height: 18px; display: block; }
.checker { background: linear-gradient(135deg, #f3ae3c, rgba(243,174,60,0) 85%), repeating-conic-gradient(#ddd 0 25%, #fff 0 50%) 0 0 / 6px 6px; }
.yellow { background: linear-gradient(180deg, #fbdc7d, #f3ae3c); }
.th-strip { flex: 1; background: linear-gradient(#ccc, #ccc) center / 100% 2px no-repeat, #eee; }
.plain { background: #fff; width: 22px; height: 26px; margin-left: 1px; }
.chain { width: 6px; height: 14px; border: 1px solid #bbb; border-radius: 3px; margin: 0 3px 0 4px; background: linear-gradient(#bbb, #bbb) center / 100% 2px no-repeat; flex: none; }
.mask { width: 22px; height: 27px; position: relative; flex: none; }
.mask.black { background: #000; }
.mask.white { background: #fff; }
.mask-shape { position: absolute; left: 0; top: 6px; width: 12px; height: 12px; background: #fff; border-radius: 6px 6px 6px 0; }
.mask-cut { position: absolute; left: 8px; top: 7px; width: 14px; height: 20px; background: #555; }
.mask-badge { position: absolute; right: 0; bottom: 0; width: 12px; height: 12px; background: radial-gradient(circle, #222 0 2px, #ddd 2.500px); border-left: 1px solid #555; border-top: 1px solid #555; }
.lname { margin-left: 7px; color: #d4d4d4; white-space: nowrap; letter-spacing: .2px; }
.bgname { margin-left: 9px; flex: 1; }
.lock-r { width: 9px; height: 11px; color: #aaa; margin-right: 13px; }
.lfooter { margin-top: auto; height: 22px; background: #545454; border-top: 1px solid #4a4a4a; display: flex; align-items: center; gap: 10px; padding-left: 67px; position: relative; }
.foot-ic { width: 13px; height: 13px; }
.foot-fx { color: #bbb; width: 10px; font-weight: bold; }
.trash-f { color: #bbb; width: 11px; margin-left: 1px; }
.smears { position: absolute; left: 85px; bottom: 0; width: 110px; height: 16px; }
```
